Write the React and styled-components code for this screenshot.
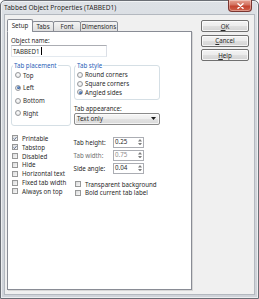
import React from 'react';
import styled, { createGlobalStyle } from 'styled-components';

const font = `"Noto Sans", "Liberation Sans", Arial, sans-serif`;

const GlobalStyle = createGlobalStyle`
  html, body { margin: 0; padding: 0; }
  body { font-family: ${font}; background: #ffffff; }
  * { box-sizing: border-box; }
`;

const Window = styled.div`
  width: 259px;
  height: 299px;
  display: flex;
  flex-direction: column;
  padding: 0 4px 4px;
  background: linear-gradient(180deg, #dde1e6 0%, #d3d7dc 30%, #cfd3d9 100%);
  border: 1px solid #6a6e75;
  border-radius: 5px 5px 0 0;
  box-shadow: inset 0 0 0 1px rgba(255, 255, 255, 0.6);
  font-family: ${font};
  font-size: 6.2px;
  color: #2a2a2a;
`;

const TitleBar = styled.div`
  height: 14px;
  flex-shrink: 0;
  display: flex;
  align-items: flex-start;
`;

const Title = styled.div`
  margin-left: -1px;
  padding-top: 2px;
  font-size: 6.6px;
  line-height: 9px;
  color: #262626;
  white-space: nowrap;
  text-shadow: 0 0 3px rgba(255, 255, 255, 0.9);
`;

const CloseButton = styled.div`
  margin-left: auto;
  margin-top: -1px;
  margin-right: 2px;
  width: 24px;
  height: 12px;
  border: 1px solid #7a3530;
  border-top: none;
  border-radius: 0 0 4px 4px;
  background: linear-gradient(180deg, #e8a393 0%, #d2715f 45%, #c3432f 55%, #d0634c 100%);
  box-shadow: inset 0 0 0 1px rgba(255, 255, 255, 0.35);
  display: flex;
  align-items: center;
  justify-content: center;
`;

const Client = styled.div`
  flex: 1;
  display: flex;
  align-items: flex-start;
  background: #f0f0f0;
  box-shadow: 0 0 0 1px #b3b8bf;
`;

const LeftColumn = styled.div`
  margin-left: 2px;
  margin-top: 4px;
  display: flex;
  flex-direction: column;
`;

const TabStrip = styled.div`
  display: flex;
  align-items: flex-end;
  height: 13px;
  position: relative;
  z-index: 1;
`;

const Tab = styled.div`
  width: ${(p) => p.$w}px;
  height: ${(p) => (p.$active ? 13 : 11)}px;
  margin-left: ${(p) => (p.$first ? 0 : -1)}px;
  display: flex;
  align-items: center;
  justify-content: center;
  border: 1px solid #898c95;
  border-bottom: ${(p) => (p.$active ? '1px solid #ffffff' : '1px solid #898c95')};
  border-radius: 2px 2px 0 0;
  background: ${(p) => (p.$active ? '#ffffff' : 'linear-gradient(180deg, #f4f4f4 0%, #e9e9e9 50%, #dedede 100%)')};
  white-space: nowrap;
  line-height: 9px;
`;

const Panel = styled.div`
  width: 185px;
  height: 259px;
  margin-top: -1px;
  background: #ffffff;
  border: 1px solid #898c95;
  box-shadow: 1px 1px 0 #d6d6d6;
  padding: 4px 0 0 3px;
  display: flex;
  flex-direction: column;
`;

const Label = styled.div`
  line-height: 9px;
  height: 9px;
  white-space: nowrap;
  color: ${(p) => (p.$disabled ? '#707070' : 'inherit')};
`;

const TextBox = styled.div`
  width: 96px;
  height: 12px;
  border: 1px solid;
  border-color: #abadb3 #dbdfe6 #e3e9ef #e2e3ea;
  padding-left: 1px;
  display: flex;
  align-items: center;
  line-height: 9px;
  background: #fff;
`;

const Caret = styled.span`
  display: inline-block;
  width: 1px;
  height: 8px;
  margin-left: 1px;
  background: #000;
`;

const GroupRow = styled.div`
  display: flex;
  gap: 3px;
  margin-top: 4px;
  align-items: flex-start;
`;

const GroupBox = styled.fieldset`
  margin: 0;
  padding: 0;
  min-width: 0;
  width: ${(p) => p.$w}px;
  height: ${(p) => p.$h}px;
  border: 1px solid #d5dfe5;
  border-radius: 3px;
  display: flex;
  flex-direction: column;
`;

const Legend = styled.legend`
  margin-left: 1px;
  padding: 0 1px;
  line-height: 9px;
  color: #2a62b8;
  white-space: nowrap;
`;

const RadioList = styled.div`
  display: flex;
  flex-direction: column;
  padding-top: 0.5px;
  padding-left: ${(p) => p.$indent}px;
  gap: ${(p) => p.$gap}px;
`;

const RadioRow = styled.div`
  height: ${(p) => p.$h}px;
  display: flex;
  align-items: center;
  gap: 2px;
  white-space: nowrap;
`;

const RadioCircle = styled.span`
  width: 6px;
  height: 6px;
  flex-shrink: 0;
  border-radius: 50%;
  border: 1px solid #979a9e;
  background: radial-gradient(circle at 50% 40%, #ffffff 0%, #e9e9e9 60%, #d2d2d2 100%);
  display: flex;
  align-items: center;
  justify-content: center;
`;

const RadioDot = styled.span`
  width: 3px;
  height: 3px;
  border-radius: 50%;
  background: radial-gradient(circle at 40% 35%, #8fb0dc 0%, #2c5aa0 60%, #1c3f78 100%);
`;

const SideColumn = styled.div`
  width: 86px;
  display: flex;
  flex-direction: column;
`;

const AppearanceLabel = styled(Label)`
  margin-top: 4px;
`;

const Dropdown = styled.div`
  height: 12px;
  border: 1px solid #8a8a8a;
  border-radius: 2px;
  background: linear-gradient(180deg, #f6f6f6 0%, #eeeeee 50%, #e2e2e2 51%, #dadada 100%);
  box-shadow: inset 0 0 0 1px rgba(255, 255, 255, 0.7);
  display: flex;
  align-items: center;
  justify-content: space-between;
  padding: 0 3px 0 2px;
  line-height: 9px;
`;

const LowerRow = styled.div`
  display: flex;
  margin-top: 8.5px;
  align-items: flex-start;
`;

const CheckList = styled.div`
  width: 62.5px;
  padding-left: 1px;
  display: flex;
  flex-direction: column;
`;

const CheckRow = styled.div`
  height: ${(p) => p.$h || 8.85}px;
  display: flex;
  align-items: center;
  gap: 4px;
  white-space: nowrap;
`;

const Box = styled.span`
  width: 6px;
  height: 6px;
  flex-shrink: 0;
  border: 1px solid #979898;
  background: linear-gradient(135deg, #d9dadb 0%, #ececec 60%, #f8f8f8 100%);
  display: flex;
  align-items: center;
  justify-content: center;
`;

const FieldsColumn = styled.div`
  display: flex;
  flex-direction: column;
  padding-top: 3px;
`;

const FieldRow = styled.div`
  display: flex;
  align-items: center;
  height: 10.5px;
  margin-bottom: 2.5px;
`;

const FieldLabel = styled(Label)`
  width: 39.5px;
`;

const Spinner = styled.div`
  width: 31px;
  height: 10.5px;
  border: 1px solid #abadb3;
  background: #ffffff;
  display: flex;
  align-items: center;
  justify-content: space-between;
  padding-left: 1px;
  line-height: 8px;
  color: ${(p) => (p.$disabled ? '#8d8d8d' : 'inherit')};
`;

const SpinArrows = styled.span`
  width: 6px;
  height: 100%;
  display: flex;
  flex-direction: column;
  align-items: center;
  justify-content: center;
  gap: 1px;
`;

const RightChecks = styled.div`
  margin-top: 4px;
  padding-left: 1.5px;
  display: flex;
  flex-direction: column;
`;

const ButtonColumn = styled.div`
  margin-left: 9px;
  margin-top: 5px;
  display: flex;
  flex-direction: column;
  gap: 2.5px;
`;

const Button = styled.div`
  width: 48px;
  height: 12px;
  border: 1px solid #707070;
  border-radius: 2px;
  background: linear-gradient(180deg, #f3f3f3 0%, #ececec 50%, #dfdfdf 51%, #d3d3d3 100%);
  box-shadow: inset 0 0 0 1px rgba(255, 255, 255, 0.75);
  display: flex;
  align-items: center;
  justify-content: center;
  line-height: 9px;
  u { text-decoration: underline; text-underline-offset: 1px; text-decoration-thickness: 0.5px; }
`;

const CheckMark = () => (
  <svg width="5" height="5" viewBox="0 0 5 5">
    <path d="M0.6 2.5 L1.9 3.8 L4.4 0.8" stroke="#3a5078" strokeWidth="1" fill="none" />
  </svg>
);

const Arrow = ({ up }) => (
  <svg width="4" height="2.5" viewBox="0 0 4 2.5">
    <path d={up ? 'M0 2.5 L2 0 L4 2.5 Z' : 'M0 0 L2 2.5 L4 0 Z'} fill="#7d7d7d" />
  </svg>
);

const Radio = ({ label, checked, h }) => (
  <RadioRow $h={h}>
    <RadioCircle>{checked && <RadioDot />}</RadioCircle>
    <span>{label}</span>
  </RadioRow>
);

const Checkbox = ({ label, checked, h }) => (
  <CheckRow $h={h}>
    <Box>{checked && <CheckMark />}</Box>
    <span>{label}</span>
  </CheckRow>
);

const SpinField = ({ label, value, disabled }) => (
  <FieldRow>
    <FieldLabel $disabled={disabled}>{label}</FieldLabel>
    <Spinner $disabled={disabled}>
      <span>{value}</span>
      <SpinArrows>
        <Arrow up />
        <Arrow />
      </SpinArrows>
    </Spinner>
  </FieldRow>
);

export default function App() {
  return (
    <>
      <GlobalStyle />
      <Window>
        <TitleBar>
          <Title>Tabbed Object Properties (TABBED1)</Title>
          <CloseButton>
            <svg width="7" height="6" viewBox="0 0 7 6">
              <path d="M1 0.8 L6 5.2 M6 0.8 L1 5.2" stroke="#ffffff" strokeWidth="1.5" strokeLinecap="round" />
            </svg>
          </CloseButton>
        </TitleBar>
        <Client>
          <LeftColumn>
            <TabStrip>
              <Tab $w={26} $first $active>Setup</Tab>
              <Tab $w={22}>Tabs</Tab>
              <Tab $w={28}>Font</Tab>
              <Tab $w={38}>Dimensions</Tab>
            </TabStrip>
            <Panel>
              <Label>Object name:</Label>
              <TextBox>
                TABBED1<Caret />
              </TextBox>
              <GroupRow>
                <GroupBox $w={60} $h={64.5}>
                  <Legend>Tab placement</Legend>
                  <RadioList $indent={3} $gap={3.8}>
                    <Radio label="Top" h={9} />
                    <Radio label="Left" h={9} checked />
                    <Radio label="Bottom" h={9} />
                    <Radio label="Right" h={9} />
                  </RadioList>
                </GroupBox>
                <SideColumn>
                  <GroupBox $w={86} $h={38.5}>
                    <Legend>Tab style</Legend>
                    <RadioList $indent={2} $gap={0}>
                      <Radio label="Round corners" h={8.7} />
                      <Radio label="Square corners" h={8.7} />
                      <Radio label="Angled sides" h={8.7} checked />
                    </RadioList>
                  </GroupBox>
                  <AppearanceLabel>Tab appearance:</AppearanceLabel>
                  <Dropdown>
                    <span>Text only</span>
                    <svg width="5" height="3" viewBox="0 0 5 3">
                      <path d="M0 0 L5 0 L2.5 3 Z" fill="#1a1a1a" />
                    </svg>
                  </Dropdown>
                </SideColumn>
              </GroupRow>
              <LowerRow>
                <CheckList>
                  <Checkbox label="Printable" checked />
                  <Checkbox label="Tabstop" checked />
                  <Checkbox label="Disabled" />
                  <Checkbox label="Hide" />
                  <Checkbox label="Horizontal text" />
                  <Checkbox label="Fixed tab width" />
                  <Checkbox label="Always on top" />
                </CheckList>
                <FieldsColumn>
                  <SpinField label="Tab height:" value="0.25" />
                  <SpinField label="Tab width:" value="0.75" disabled />
                  <SpinField label="Side angle:" value="0.04" />
                  <RightChecks>
                    <Checkbox label="Transparent background" h={8.6} />
                    <Checkbox label="Bold current tab label" h={8.6} />
                  </RightChecks>
                </FieldsColumn>
              </LowerRow>
            </Panel>
          </LeftColumn>
          <ButtonColumn>
            <Button><span><u>O</u>K</span></Button>
            <Button><span><u>C</u>ancel</span></Button>
            <Button><span><u>H</u>elp</span></Button>
          </ButtonColumn>
        </Client>
      </Window>
    </>
  );
}
